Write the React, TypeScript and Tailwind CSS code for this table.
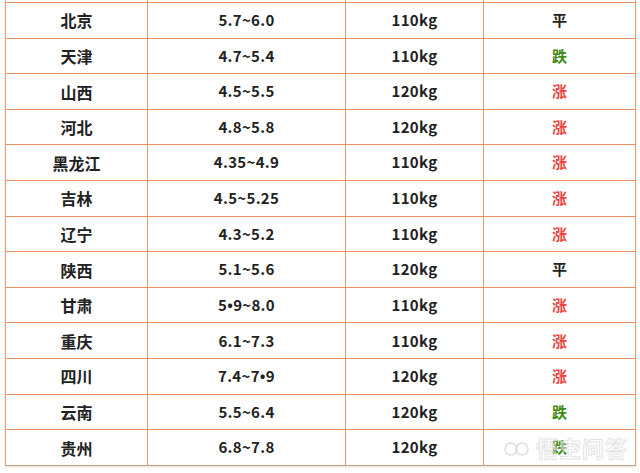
const rows: [string, string, string, string][] = [
  ["北京", "5.7~6.0", "110kg", "平"],
  ["天津", "4.7~5.4", "110kg", "跌"],
  ["山西", "4.5~5.5", "120kg", "涨"],
  ["河北", "4.8~5.8", "120kg", "涨"],
  ["黑龙江", "4.35~4.9", "110kg", "涨"],
  ["吉林", "4.5~5.25", "110kg", "涨"],
  ["辽宁", "4.3~5.2", "110kg", "涨"],
  ["陕西", "5.1~5.6", "120kg", "平"],
  ["甘肃", "5•9~8.0", "110kg", "涨"],
  ["重庆", "6.1~7.3", "110kg", "涨"],
  ["四川", "7.4~7•9", "120kg", "涨"],
  ["云南", "5.5~6.4", "120kg", "跌"],
  ["贵州", "6.8~7.8", "120kg", "跌"],
];

function trendColor(t: string) {
  if (t === "涨") return "text-[#e8463f]";
  if (t === "跌") return "text-[#3f8a12]";
  return "text-[#222]";
}

// the bullet is wide in the CJK font, so draw it in a latin one
function Price({ value }: { value: string }) {
  const parts = value.split("•");
  return (
    <>
      {parts.map((p, i) => (
        <span key={i}>
          {i > 0 && <span className="font-['Open_Sans',sans-serif]">•</span>}
          {p}
        </span>
      ))}
    </>
  );
}

const cell = "flex items-center justify-center border-r border-[#ec9160]";

export default function App() {
  return (
    <div className="relative h-[473px] w-[640px] overflow-hidden bg-white pl-[5px] font-['Noto_Sans_CJK_SC',sans-serif] text-[#222]">
      <div className="flex h-[466px] w-[631px] flex-col border-l border-b border-l-[#dca27a] border-b-[#c9a27f] shadow-[0_1px_2px_rgba(150,110,70,0.25)]">
        <div className="flex h-[3px] border-b border-[#ec9160]">
          <div className="w-[142px] border-r border-[#ec9160]" />
          <div className="w-[198px] border-r border-[#ec9160]" />
          <div className="w-[138px] border-r border-[#ec9160]" />
          <div className="flex-1 border-r border-[#e0a27a]" />
        </div>
        {rows.map(([city, price, weight, trend], i) => (
          <div
            key={city}
            className={`flex flex-1 ${i < rows.length - 1 ? "border-b border-[#ec9160]" : ""}`}
          >
            <div className={`${cell} w-[142px] text-[16px] font-bold`}>{city}</div>
            <div className={`${cell} w-[198px] text-[15px] font-bold tracking-[0.3px]`}>
              <Price value={price} />
            </div>
            <div className={`${cell} w-[138px] text-[15px] font-bold tracking-[0.3px]`}>{weight}</div>
            <div className={`flex flex-1 items-center justify-center border-r border-[#e0a27a] text-[15px] font-bold ${trendColor(trend)}`}>
              {trend}
            </div>
          </div>
        ))}
      </div>
      <div className="pointer-events-none absolute bottom-[9px] right-[12px] flex items-center gap-[4px] text-[22px] font-bold text-white/50 [-webkit-text-stroke:1px_rgba(200,200,200,0.5)]">
        <svg width="30" height="18" viewBox="0 0 30 18" fill="none" stroke="rgba(200,200,200,0.6)" strokeWidth="1.5">
          <circle cx="9" cy="10" r="6" />
          <circle cx="20" cy="10" r="6" />
        </svg>
        <span className="tracking-[1px]">悟空问答</span>
      </div>
    </div>
  );
}
